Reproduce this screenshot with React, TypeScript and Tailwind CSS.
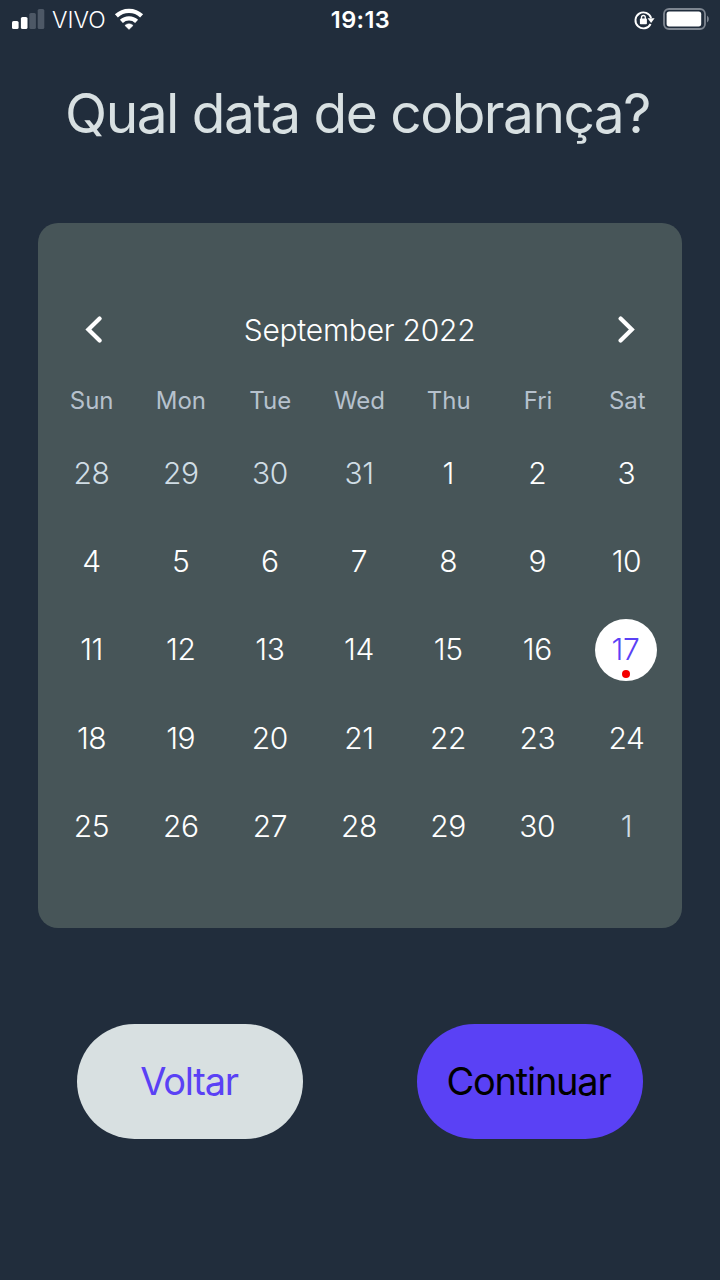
const weekdays = ['Sun', 'Mon', 'Tue', 'Wed', 'Thu', 'Fri', 'Sat'];

const days = [
  28, 29, 30, 31,
  ...Array.from({ length: 30 }, (_, i) => i + 1),
  1,
];

function Signal() {
  return (
    <svg width="33" height="20" viewBox="0 0 33 20" className="mb-0.5 shrink-0">
      <rect x="0" y="12" width="6.6" height="8" rx="1.6" fill="#fff" />
      <rect x="8.9" y="8" width="6.6" height="12" rx="1.6" fill="#fff" />
      <rect x="17.3" y="4" width="6.6" height="16" rx="1.6" fill="#4d5866" />
      <rect x="25.7" y="0" width="6.6" height="20" rx="1.6" fill="#4d5866" />
    </svg>
  );
}

function Wifi() {
  return (
    <svg width="30" height="22" viewBox="0 0 30 22" className="mb-0.5 shrink-0">
      <g fill="none" stroke="#fff" strokeWidth="4.3">
        <path d="M2.4 7.9 A18.2 18.2 0 0 1 27.6 7.9" />
        <path d="M7.4 13.4 A11 11 0 0 1 22.6 13.4" />
      </g>
      <path d="M15 21.4 L10.9 17.4 A6 6 0 0 1 19.1 17.4 Z" fill="#fff" stroke="#fff" strokeWidth="0.5" strokeLinejoin="round" />
    </svg>
  );
}

function RotationLock() {
  return (
    <svg width="21" height="20" viewBox="0 0 21 20" className="shrink-0">
      <path d="M17.1 8 A8 8 0 1 0 16.6 14" fill="none" stroke="#fff" strokeWidth="1.9" />
      <path d="M13.6 8.2 H20.6 L17.1 12.9 Z" fill="#fff" />
      <rect x="5.9" y="8.6" width="7" height="5.6" rx="0.8" fill="#fff" />
      <path d="M7.5 9 V7.4 A1.9 1.9 0 0 1 11.3 7.4 V9" fill="none" stroke="#fff" strokeWidth="1.3" />
    </svg>
  );
}

function Battery() {
  return (
    <svg width="46" height="22" viewBox="0 0 46 22" className="mb-0.5 shrink-0">
      <rect x="1" y="1" width="41" height="20" rx="5" fill="none" stroke="#7e8691" strokeWidth="1.8" />
      <rect x="3.6" y="3.6" width="34.6" height="14.8" rx="2.6" fill="#fff" />
      <path d="M44 7.6 A4 4 0 0 1 44 14.4 Z" fill="#7e8691" />
    </svg>
  );
}

function Chevron({ flip = false }: { flip?: boolean }) {
  return (
    <svg width="18" height="28" viewBox="0 0 18 28">
      <path
        d={flip ? 'M3.6 3.6 L14.8 14.6 L3.6 25.6' : 'M15.6 3.6 L4.4 14.6 L15.6 25.6'}
        fill="none"
        stroke="#fff"
        strokeWidth="4.2"
        strokeLinecap="round"
      />
    </svg>
  );
}

function Day({ index, day }: { index: number; day: number }) {
  const outside = index < 4 || index === 34;
  if (index === 20) {
    return (
      <div className="relative flex h-[62px] w-[62px] items-center justify-center rounded-full bg-white pr-[2px] text-[#5a41f5]">
        <span>{day}</span>
        <i className="absolute bottom-[3px] left-[27px] h-2 w-2 rounded-full bg-[#f40000]" />
      </div>
    );
  }
  return <span className={outside ? 'text-[#d0dde5]' : 'text-white'}>{day}</span>;
}

export default function App() {
  return (
    <main className="flex h-[1280px] w-[720px] flex-col overflow-hidden bg-[#212d3c] font-['Inter',sans-serif]">
      <header className="grid h-10 grid-cols-3 items-center pr-[11px] pl-3 text-white">
        <div className="flex items-center">
          <Signal />
          <span className="ml-[7px] text-[23px] leading-10 font-light">VIVO</span>
          <span className="ml-[8px]"><Wifi /></span>
        </div>
        <div className="text-center text-[23.5px] leading-10 font-semibold tracking-[0.4px]">19:13</div>
        <div className="flex items-center justify-end gap-[8px]">
          <RotationLock />
          <Battery />
        </div>
      </header>

      <h1 className="mt-[33px] pr-[5px] text-center text-[55px] leading-[80px] font-normal tracking-[-1.5px] whitespace-nowrap text-[#d8e0e2]">
        Qual data de cobrança?
      </h1>

      <section className="mx-[38px] mt-[70px] h-[705px] rounded-[20px] bg-[#475558] pr-[10px] pl-[9px] pt-[77px]">
        <div className="flex h-[60px] items-center justify-between pr-[37px] pl-[37px] text-white">
          <button aria-label="Previous month" className="mb-0.5"><Chevron /></button>
          <h2 className="text-[30px] font-light tracking-[-0.25px]">September 2022</h2>
          <button aria-label="Next month" className="mb-0.5"><Chevron flip /></button>
        </div>
        <div className="mt-[21px] grid h-[40px] grid-cols-7 items-center text-center text-[24px] text-[#b6c1cd]">
          {weekdays.map((name) => (
            <span key={name}>{name}</span>
          ))}
        </div>
        <div className="mt-[8px] grid auto-rows-[88.3px] grid-cols-7 place-items-center pr-px text-[30px] font-light tracking-[-0.4px]">
          {days.map((day, index) => (
            <Day key={index} index={index} day={day} />
          ))}
        </div>
      </section>

      <div className="mt-[96px] flex justify-between px-[77px] text-[38px] tracking-[-1.25px]">
        <button className="h-[115px] w-[226px] rounded-full bg-[#d8e0e1] pr-[2px] text-[#5a41f5]">Voltar</button>
        <button className="h-[115px] w-[226px] rounded-full bg-[#5a41f5] pr-[3px] text-black">Continuar</button>
      </div>
    </main>
  );
}
